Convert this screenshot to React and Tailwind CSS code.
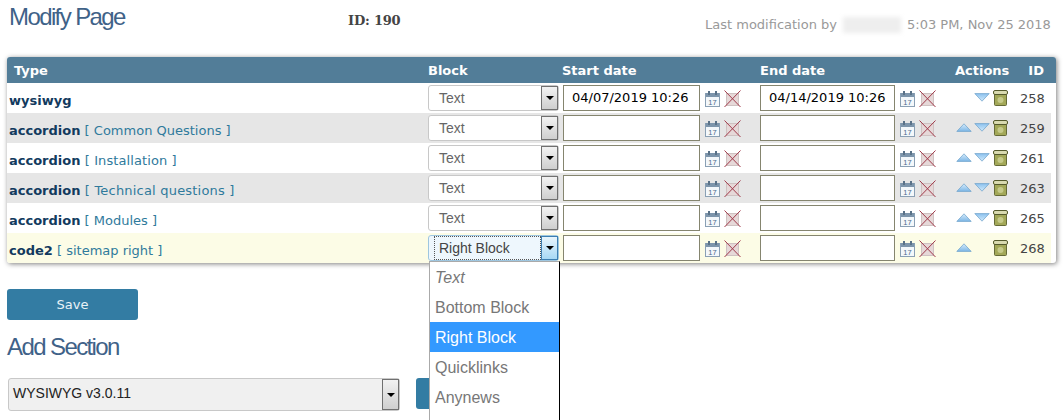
const sans = "font-['DejaVu_Sans',sans-serif]";
const arial = "font-['Liberation_Sans',Arial,sans-serif]";

function Arrow({ active }) {
  return (
    <div className={`w-[17px] h-full flex items-center justify-center border ${active ? "border-[#3c7fb1] bg-gradient-to-b from-[#e8f5fc] to-[#a7d9f5]" : "border-[#707070] bg-gradient-to-b from-[#f2f2f2] to-[#cfcfcf]"}`}>
      <svg width="8" height="4" viewBox="0 0 8 4"><path d="M0 0h8L4 4z" fill="#000" /></svg>
    </div>
  );
}

function BlockSelect({ value, active }) {
  return (
    <div className={`w-[131px] h-[26px] rounded-[3px] border flex items-stretch ${active ? "border-[#9ec6e0] bg-[#eef7fd]" : "border-[#c8c8c8] bg-white"}`}>
      <div className={`flex-1 text-[14px] leading-[22px] pl-[4px] ml-[5px] border ${active ? "border-dotted border-[#555] text-[#444]" : "border-transparent text-[#666]"} ${arial}`}>{value}</div>
      <Arrow active={active} />
    </div>
  );
}

function Calendar() {
  return (
    <svg width="15" height="17" viewBox="0 0 15 17" className="shrink-0">
      <rect x=".5" y="3.5" width="14" height="13" fill="#f4f8fb" stroke="#8aa0b4" />
      <rect x="1" y="3" width="13" height="4" fill="#7d95ab" />
      <rect x="3" y="1" width="2" height="4" fill="#5a7288" />
      <rect x="10" y="1" width="2" height="4" fill="#5a7288" />
      <text x="7.5" y="14.5" textAnchor="middle" fontSize="7.5" fontFamily="Liberation Sans, sans-serif" fill="#4c6c8a">17</text>
    </svg>
  );
}

function Clear() {
  return (
    <svg width="17" height="17" viewBox="0 0 17 17" className="shrink-0 ml-[4px]">
      <rect x="2.5" y="3.5" width="12" height="12" fill="#e6d8d8" stroke="#cfc2c2" />
      <path d="M.5 .5l16 16.5M16.5 .5L.5 17" stroke="#a03a4a" strokeWidth="1" fill="none" />
    </svg>
  );
}

function DateField({ value, w }) {
  return (
    <div className="flex items-center">
      <div className={`${w} h-[26px] border border-[#85856f] bg-white text-[13px] leading-[24px] pl-[8px] pr-[8px] text-black ${sans}`}>
        <div className="overflow-hidden whitespace-nowrap h-full">{value}</div>
      </div>
      <div className="flex items-center ml-[5px]"><Calendar /><Clear /></div>
    </div>
  );
}

function Up({ hidden }) {
  return (
    <svg width="16" height="9" viewBox="0 0 16 9" className={`shrink-0 ${hidden ? "invisible" : ""}`}>
      <defs><linearGradient id="u" x1="0" y1="0" x2="0" y2="1"><stop offset="0" stopColor="#d6ecfb" /><stop offset="1" stopColor="#7db6e6" /></linearGradient></defs>
      <path d="M8 .8L15.2 8.4H.8z" fill="url(#u)" stroke="#6a9fc8" strokeWidth=".7" />
    </svg>
  );
}

function Down({ hidden }) {
  return (
    <svg width="16" height="9" viewBox="0 0 16 9" className={`shrink-0 ${hidden ? "invisible" : ""}`}>
      <defs><linearGradient id="d" x1="0" y1="0" x2="0" y2="1"><stop offset="0" stopColor="#8cc2ee" /><stop offset="1" stopColor="#d3eafb" /></linearGradient></defs>
      <path d="M8 8.2L15.2.6H.8z" fill="url(#d)" stroke="#6a9fc8" strokeWidth=".7" />
    </svg>
  );
}

function Bin() {
  return (
    <svg width="15" height="16" viewBox="0 0 15 16" className="shrink-0 block">
      <rect x="1.5" y="4" width="12" height="11.5" rx="1" fill="#a3a858" stroke="#666b38" />
      <rect x=".5" y=".5" width="14" height="4" rx="1.5" fill="#d9dab0" stroke="#555a2c" />
      <circle cx="7.5" cy="10" r="3" fill="#c6ca8a" />
    </svg>
  );
}

const rows = [
  { type: "wysiwyg", block: "Text", start: "04/07/2019 10:26", end: "04/14/2019 10:26", id: 258, bg: "bg-white", up: false, down: true, track: "" },
  { type: "accordion", name: "Common Questions", block: "Text", id: 259, bg: "bg-[#e6e6e6]", up: true, down: true, track: "" },
  { type: "accordion", name: "Installation", block: "Text", id: 261, bg: "bg-white", up: true, down: true, track: "tracking-[0.1px]" },
  { type: "accordion", name: "Technical questions", block: "Text", id: 263, bg: "bg-[#e6e6e6]", up: true, down: true, track: "tracking-[0.2px]" },
  { type: "accordion", name: "Modules", block: "Text", id: 265, bg: "bg-white", up: true, down: true, track: "" },
  { type: "code2", name: "sitemap right", block: "Right Block", id: 268, bg: "bg-[#fcfce6]", up: true, down: false, active: true, track: "" },
];

const grid = "grid grid-cols-[421px_135px_197px_195px_65px_24px]";

function Row({ r }) {
  return (
    <div className={`${grid} h-[30px] items-center ${r.bg} ${sans} text-[13px]`}>
      <div className="pl-[2px] pt-[6px] whitespace-nowrap">
        <b className="text-[#123a5e]">{r.type}</b>
        {r.name && <span className={`text-[#2f7a9c] ${r.track}`}> [ {r.name} ]</span>}
      </div>
      <BlockSelect value={r.block} active={r.active} />
      <DateField value={r.start} w="w-[137px]" />
      <DateField value={r.end} w="w-[135px]" />
      <div className="flex items-center gap-[2px] pl-[1px]">
        <div className="-mt-[1px] flex gap-[2px]">
          <Up hidden={!r.up} />
          <Down hidden={!r.down} />
        </div>
        <div className="ml-[1px] -mt-[1px]"><Bin /></div>
      </div>
      <div className="text-[#444] text-right pt-[2px]">{r.id}</div>
    </div>
  );
}

const options = ["Text", "Bottom Block", "Right Block", "Quicklinks", "Anynews", ""];

export default function App() {
  return (
    <div className="relative w-[1064px] h-[420px] overflow-hidden bg-white">
      <div className="h-[57px] relative flex items-start">
        <h1 className={`${arial} ml-[9px] mt-[3px] text-[24px] leading-[28px] tracking-[-1.6px] text-[#3f6288] font-normal w-[339px]`}>Modify Page</h1>
        <div className="mt-[13px] text-[13px] leading-[16px] font-bold tracking-[-0.2px] text-[#444] font-['DejaVu_Serif',serif] w-[357px]">ID: 190</div>
        <div className={`${sans} mt-[17px] text-[13px] leading-[16px] text-[#999] flex items-center whitespace-nowrap`}>
          Last modification by
          <span className="inline-block w-[58px] h-[16px] mx-[6px] bg-[#eeeeee] blur-[2px]" />
          5:03 PM, Nov 25 2018
        </div>
      </div>

      <div className="ml-[7px] w-[1049px] h-[206px] rounded-[3px] bg-white shadow-[1px_1px_5px_rgba(0,0,0,0.5)] overflow-hidden">
        <div className={`${grid} h-[26px] pt-[2px] items-center bg-[#527d98] text-white text-[13px] font-bold ${sans}`}>
          <div className="pl-[7px]">Type</div>
          <div>Block</div>
          <div className="-ml-[1px]">Start date</div>
          <div>End date</div>
          <div>Actions</div>
          <div className="text-right">ID</div>
        </div>
        <div className="w-[1044px]">
          {rows.map((r) => <Row key={r.id} r={r} />)}
        </div>
      </div>

      <div className={`ml-[7px] mt-[26px] w-[131px] h-[31px] rounded-[3px] bg-[#337ca3] text-[#e8f2f7] text-[13px] leading-[32px] text-center ${sans}`}>Save</div>

      <h2 className={`${arial} ml-[7px] mt-[13px] text-[24px] leading-[28px] tracking-[-1.6px] text-[#3f6288] font-normal`}>Add Section</h2>

      <div className="ml-[8px] mt-[17px] flex items-start">
        <div className="w-[392px] h-[33px] rounded-[3px] border border-[#c8c8c8] bg-[#f0f0f0] flex items-stretch">
          <div className={`flex-1 text-[14px] leading-[29px] pl-[4px] text-[#222] ${arial}`}>WYSIWYG v3.0.11</div>
          <Arrow />
        </div>
        <div className="ml-[16px] w-[60px] h-[31px] rounded-[3px] bg-[#337ca3]" />
      </div>

      <div className={`absolute left-[429px] top-[261px] w-[131px] border-t border-t-[#aaa] border-l border-l-[#aaa] border-r border-r-black bg-white text-[16px] ${arial}`}>
        {options.map((o, i) => (
          <div key={i} className={`h-[30px] leading-[32px] pl-[5px] ${o === "Right Block" ? "bg-[#3399ff] text-white" : "text-[#777]"} ${o === "Text" ? "italic" : ""}`}>{o}</div>
        ))}
      </div>
    </div>
  );
}
